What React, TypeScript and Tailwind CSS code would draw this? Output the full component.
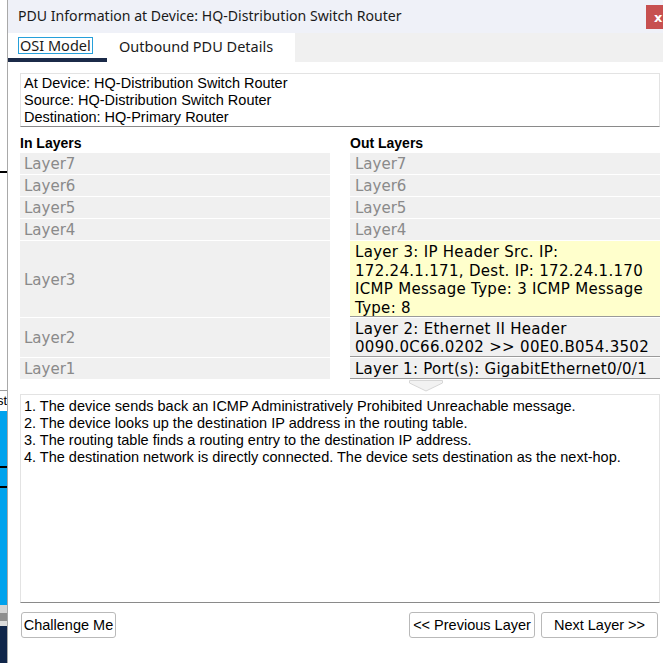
import React from "react"

const inLayers = [
  { label: "Layer7", h: "h-[21px]" },
  { label: "Layer6", h: "h-[21px]" },
  { label: "Layer5", h: "h-[21px]" },
  { label: "Layer4", h: "h-[21px]" },
  { label: "Layer3", h: "h-[76px]" },
  { label: "Layer2", h: "h-[39px]" },
  { label: "Layer1", h: "h-[21px]" },
]

const steps = [
  "1. The device sends back an ICMP Administratively Prohibited Unreachable message.",
  "2. The device looks up the destination IP address in the routing table.",
  "3. The routing table finds a routing entry to the destination IP address.",
  "4. The destination network is directly connected. The device sets destination as the next-hop.",
]

const layerFont = { fontFamily: '"DejaVu Sans", Verdana, sans-serif' }

function Backdrop() {
  // bits of the desktop app peeking out behind the dialog
  return (
    <div className="flex w-[7px] shrink-0 flex-col bg-white">
      <div className="h-[171px]" />
      <div className="h-[2px] bg-black" />
      <div className="h-[217px]" />
      <div className="h-px bg-[#a0a0a0]" />
      <div className="flex h-[20px] justify-end overflow-hidden whitespace-nowrap text-[13px] leading-[20px] text-black" style={{ fontFamily: '"Liberation Sans", sans-serif' }}>
        st
      </div>
      <div className="flex h-[194px] flex-col bg-[#00a2ed]">
        <div className="h-[55px]" />
        <div className="h-[2px] bg-black" />
        <div className="h-[18px]" />
        <div className="h-[2px] bg-black" />
      </div>
      <div className="h-[8px] bg-[#d4d4d4]" />
      <div className="h-[8px] bg-[#8f8f8f]" />
      <div className="h-[5px] bg-[#dcdcdc]" />
      <div className="flex-1 bg-[#10264a]" />
    </div>
  )
}

function Button({ children, className = "" }: { children: React.ReactNode; className?: string }) {
  return (
    <button className={`h-[26px] rounded-[3px] border border-[#b9b9b9] bg-white text-[14.5px] leading-none text-black ${className}`}>
      {children}
    </button>
  )
}

export default function App() {
  return (
    <div className="flex h-[663px] w-[663px] overflow-hidden bg-white" style={{ fontFamily: '"Liberation Sans", Arial, sans-serif' }}>
      <Backdrop />
      <div className="flex min-w-0 flex-1 flex-col border-l border-[#a9a9a9]">
        {/* title bar */}
        <div className="flex h-[33px] shrink-0 items-start justify-between bg-[#eff1f8]">
          <div className="pl-[10px] pt-[6px] text-[14.1px] leading-[20px] text-[#1a1a1a]" style={{ fontFamily: '"Noto Sans", sans-serif' }}>
            PDU Information at Device: HQ-Distribution Switch Router
          </div>
          <div className="mt-[5px] flex h-[24px] w-[17px] items-center bg-[#c75050] pl-[8px] text-[13px] font-bold leading-none text-white" style={{ fontFamily: '"DejaVu Sans", sans-serif' }}>
            x
          </div>
        </div>

        {/* tabs */}
        <div className="flex h-[29px] shrink-0 bg-[#f0f0f0]" style={{ fontFamily: '"Noto Sans", sans-serif' }}>
          <div className="flex w-[99px] flex-col bg-white">
            <div className="flex flex-1 items-center pl-[10px]">
              <span className="border border-[#26a0da] px-px text-[14.5px] leading-[15px] text-[#1a1a1a]">OSI Model</span>
            </div>
            <div className="h-[4px] bg-[#1b2a48]" />
          </div>
          <div className="flex w-[188px] items-center bg-white pb-[2px] pl-[12px] text-[14.5px] text-[#1a1a1a]">
            Outbound PDU Details
          </div>
        </div>

        {/* content */}
        <div className="flex flex-1 flex-col pl-[12px] pr-[3px]">
          <div className="mt-[11px] border border-[#e3e3e3] border-b-[#8a8a8a] pl-[3px] pt-px text-[14.5px] leading-[17px] text-black">
            <div>At Device: HQ-Distribution Switch Router</div>
            <div>Source: HQ-Distribution Switch Router</div>
            <div>Destination: HQ-Primary Router</div>
          </div>

          <div className="grid grid-cols-2 gap-x-[20px]">
            <div className="flex flex-col">
              <div className="mb-[1px] mt-[8px] text-[14px] font-bold leading-[17px] text-black">In Layers</div>
              <div className="flex flex-col gap-px" style={layerFont}>
                {inLayers.map((l) => (
                  <div key={l.label} className={`flex items-center bg-[#f0f0f0] pl-[4px] pt-[2px] text-[15px] text-[#8a8a8a] ${l.h}`}>
                    {l.label}
                  </div>
                ))}
              </div>
            </div>

            <div className="flex flex-col">
              <div className="mb-[1px] mt-[8px] text-[14px] font-bold leading-[17px] text-black">Out Layers</div>
              <div className="flex flex-col gap-px whitespace-nowrap" style={layerFont}>
                {["Layer7", "Layer6", "Layer5", "Layer4"].map((l) => (
                  <div key={l} className="flex h-[21px] items-center bg-[#f0f0f0] pl-[5px] pt-[2px] text-[15px] text-[#8a8a8a]">
                    {l}
                  </div>
                ))}
                <div className="h-[76px] border-b border-[#9a9a9a] bg-[#ffffcc] pl-[5px] pt-[2px] text-[15px] leading-[18.5px] tracking-[0.3px] text-black">
                  <div>Layer 3: IP Header Src. IP:</div>
                  <div>172.24.1.171, Dest. IP: 172.24.1.170</div>
                  <div>ICMP Message Type: 3 ICMP Message</div>
                  <div>Type: 8</div>
                </div>
                <div className="h-[39px] border-b border-[#9a9a9a] bg-[#f0f0f0] pl-[5px] pt-[2px] text-[15px] leading-[18px] tracking-[0.3px] text-black">
                  <div>Layer 2: Ethernet II Header</div>
                  <div>0090.0C66.0202 &gt;&gt; 00E0.B054.3502</div>
                </div>
                <div className="flex h-[21px] items-center border-b border-[#9a9a9a] bg-[#f0f0f0] pl-[5px] pt-[2px] text-[15px] tracking-[0.25px] text-black">
                  Layer 1: Port(s): GigabitEthernet0/0/1
                </div>
              </div>
            </div>
          </div>

          {/* scroll hint arrow */}
          <div className="flex h-[15px] justify-center pl-[172px]">
            <svg width="34" height="12" viewBox="0 0 34 12" className="mt-[1px]">
              <polygon points="0.5,0.5 33.5,0.5 33.5,3 17,11 0.5,3" fill="#f2f2f2" stroke="#d6d6d6" />
            </svg>
          </div>

          <div className="h-[209px] border border-[#e3e3e3] border-b-[#8a8a8a] pl-[3px] pt-[3px] text-[14.5px] leading-[17px] text-black">
            {steps.map((s) => (
              <div key={s}>{s}</div>
            ))}
          </div>

          <div className="mt-[9px] flex items-start justify-between">
            <Button className="ml-px w-[95px]">Challenge Me</Button>
            <div className="flex gap-[6px]">
              <Button className="w-[126px]">&lt;&lt; Previous Layer</Button>
              <Button className="mr-[2px] w-[117px]">Next Layer &gt;&gt;</Button>
            </div>
          </div>
        </div>
      </div>
    </div>
  )
}
